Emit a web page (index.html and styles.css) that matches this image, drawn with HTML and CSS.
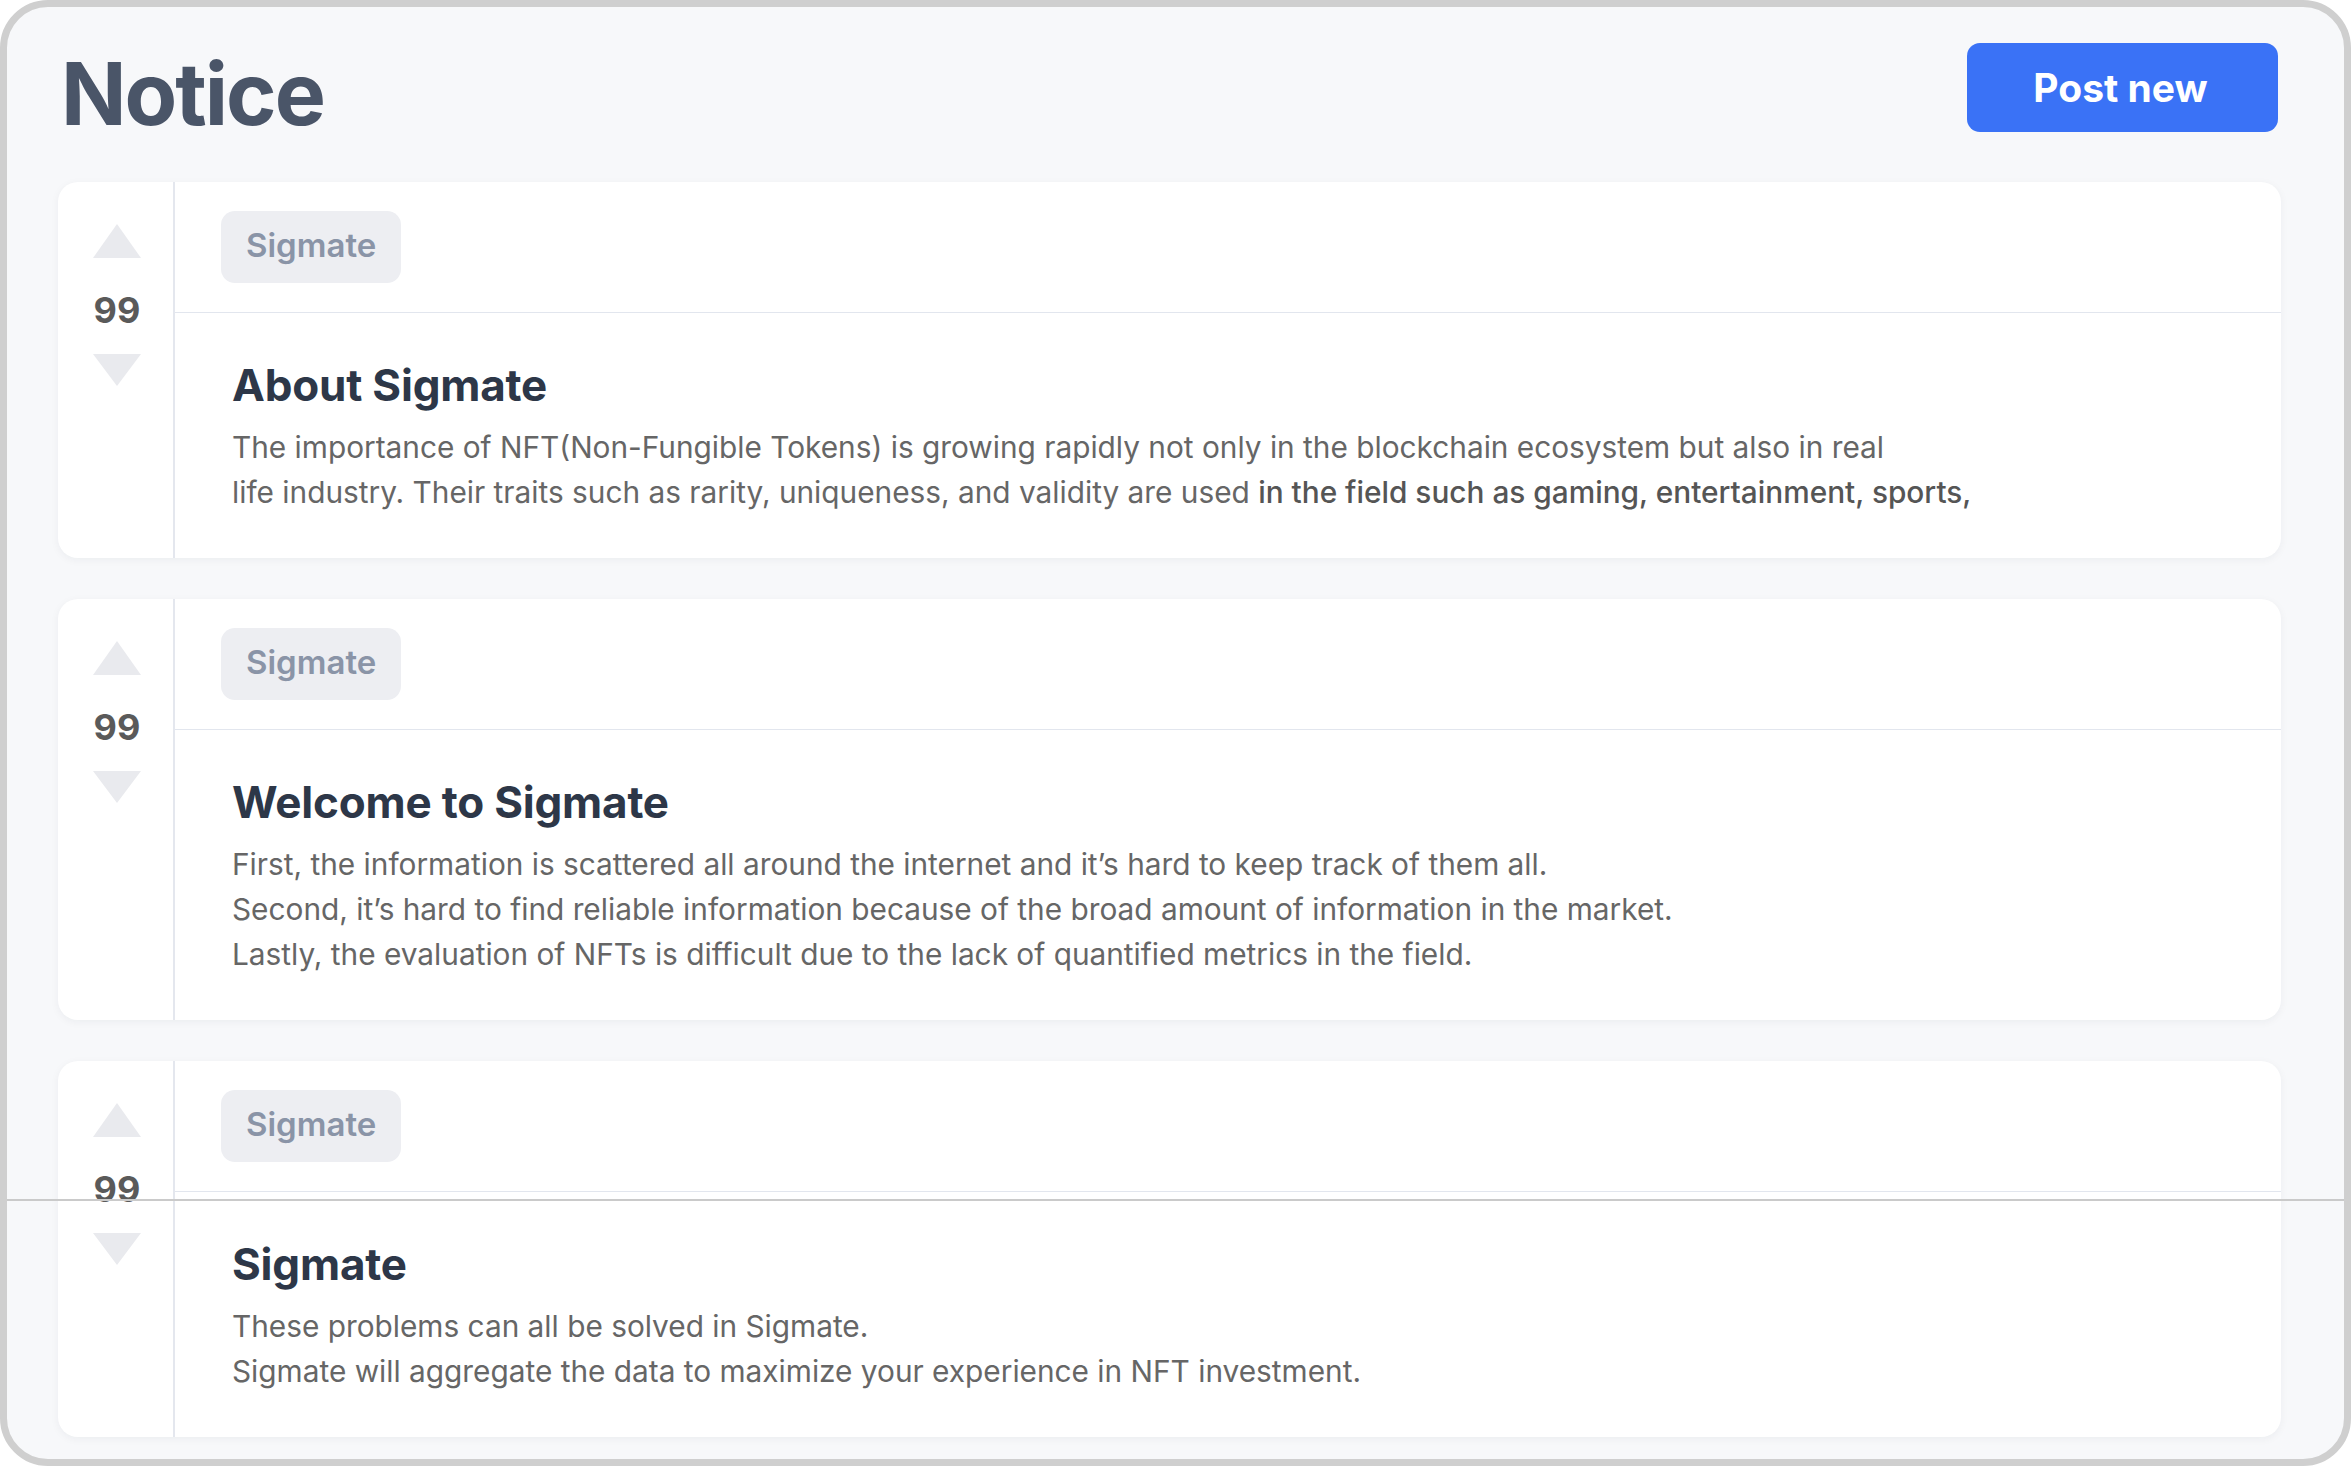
FILE: index.html
```html
<!DOCTYPE html>
<html lang="en">
<head>
<meta charset="utf-8">
<title>Notice</title>
<link rel="stylesheet" href="styles.css">
</head>
<body>
<div class="frame">
  <div class="header">
    <h1 class="page-title">Notice</h1>
    <button class="post-btn">Post new</button>
  </div>
  <div class="list">
    <div class="card">
      <div class="vote">
        <span class="tri up"></span>
        <span class="count">99</span>
        <span class="tri down"></span>
      </div>
      <div class="main">
        <div class="card-top"><span class="tag">Sigmate</span></div>
        <div class="card-body">
          <h2 class="card-title">About Sigmate</h2>
          <p class="card-text">The importance of NFT(Non-Fungible Tokens) is growing rapidly not only in the blockchain ecosystem but also in real<br>life industry. Their traits such as rarity, uniqueness, and validity are used <span class="em">in the field such as gaming, entertainment, sports,</span></p>
        </div>
      </div>
    </div>
    <div class="card">
      <div class="vote">
        <span class="tri up"></span>
        <span class="count">99</span>
        <span class="tri down"></span>
      </div>
      <div class="main">
        <div class="card-top"><span class="tag">Sigmate</span></div>
        <div class="card-body">
          <h2 class="card-title">Welcome to Sigmate</h2>
          <p class="card-text">First, the information is scattered all around the internet and it’s hard to keep track of them all.<br>Second, it’s hard to find reliable information because of the broad amount of information in the market.<br>Lastly, the evaluation of NFTs is difficult due to the lack of quantified metrics in the field.</p>
        </div>
      </div>
    </div>
    <div class="card">
      <div class="vote">
        <span class="tri up"></span>
        <span class="count">99</span>
        <span class="tri down"></span>
      </div>
      <div class="main">
        <div class="card-top"><span class="tag">Sigmate</span></div>
        <div class="card-body">
          <h2 class="card-title">Sigmate</h2>
          <p class="card-text">These problems can all be solved in Sigmate.<br>Sigmate will aggregate the data to maximize your experience in NFT investment.</p>
        </div>
      </div>
    </div>
  </div>
  <div class="scan-line"></div>
</div>
</body>
</html>
```

FILE: styles.css
```css
* { box-sizing: border-box; }
html, body { margin: 0; padding: 0; }
body {
  width: 2351px;
  height: 1466px;
  overflow: hidden;
  background: #ffffff;
  font-family: Inter, "Noto Sans", "Liberation Sans", sans-serif;
}
.frame {
  position: relative;
  width: 2351px;
  height: 1466px;
  border: 7px solid #cfcfcf;
  border-radius: 48px;
  background: #f7f8fa;
  padding: 36px 63px 0 51px;
  overflow: hidden;
}
.header {
  display: flex;
  justify-content: space-between;
  align-items: flex-start;
  margin-bottom: 44px;
}
.page-title {
  margin: 8px 0 0 3px;
  font-size: 86px;
  line-height: 87px;
  font-weight: 700;
  color: #4a5568;
  letter-spacing: -2px;
}
.post-btn {
  margin: 0 3px 0 0;
  width: 311px;
  height: 89px;
  border: none;
  border-radius: 13px;
  background: #3a72f6;
  color: #ffffff;
  font-family: Inter, "Noto Sans", sans-serif;
  font-size: 39px;
  font-weight: 700;
  padding: 0 4px 0 0;
}
.list {
  display: flex;
  flex-direction: column;
  gap: 41px;
}
.card {
  display: flex;
  background: #ffffff;
  border-radius: 20px;
  box-shadow: 0 2px 8px rgba(20, 30, 60, 0.05);
  overflow: hidden;
}
.vote {
  width: 117px;
  flex: none;
  border-right: 2px solid #e4e7ee;
  display: flex;
  flex-direction: column;
  align-items: center;
  padding-top: 42px;
  padding-left: 3px;
}
.tri {
  width: 0;
  height: 0;
  border-left: 24px solid transparent;
  border-right: 24px solid transparent;
}
.tri.up { border-bottom: 34px solid #e9eaee; }
.tri.down { border-top: 32px solid #e9eaee; }
.count {
  margin: 34px 0 26px;
  font-size: 36px;
  line-height: 36px;
  font-weight: 700;
  color: #5a5a5a;
}
.main {
  flex: 1;
  display: flex;
  flex-direction: column;
}
.card-top {
  padding: 29px 46px;
  border-bottom: 1px solid #e2e6ee;
}
.tag {
  display: inline-flex;
  align-items: center;
  height: 72px;
  padding: 0 25px 4px;
  border-radius: 14px;
  background: #edeef2;
  color: #8a94a7;
  font-size: 33px;
  font-weight: 600;
}
.card-body {
  padding: 46px 58px 43px 57px;
}
.card-title {
  margin: 0 0 14px;
  font-size: 44px;
  line-height: 52px;
  font-weight: 700;
  color: #2d3748;
  letter-spacing: -0.2px;
}
.card-text {
  margin: 0;
  font-size: 29.8px;
  line-height: 45px;
  font-weight: 400;
  color: #666666;
}
.card-text .em {
  font-weight: 500;
  color: #555555;
}
.scan-line {
  position: absolute;
  left: 0;
  right: 0;
  top: 1192px;
  height: 2px;
  background: #cacaca;
}
```
